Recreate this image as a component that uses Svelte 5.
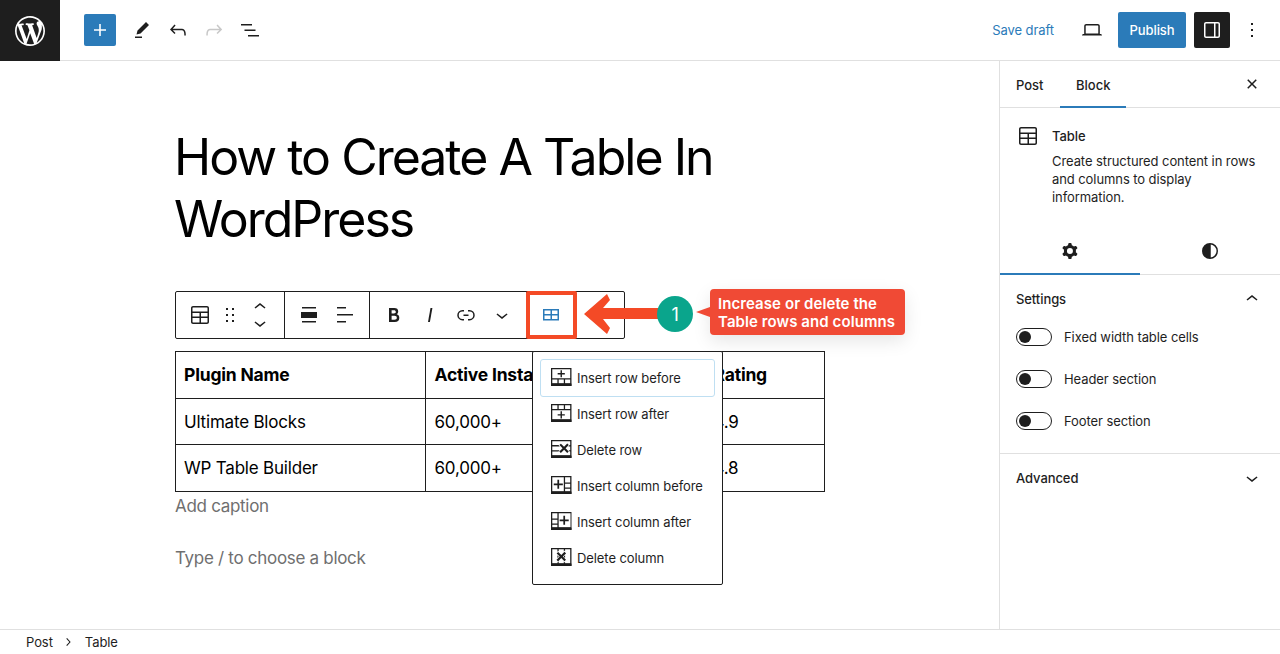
<script>
  const wp = "M20 10c0-5.51-4.49-10-10-10C4.48 0 0 4.49 0 10c0 5.52 4.48 10 10 10 5.51 0 10-4.48 10-10zM7.78 15.37L4.37 6.22c.55-.02 1.17-.08 1.17-.08.5-.06.44-1.13-.06-1.11 0 0-1.45.11-2.37.11-.18 0-.37 0-.58-.01C4.12 2.69 6.87 1.11 10 1.11c2.33 0 4.45.87 6.05 2.34-.68-.11-1.65.39-1.65 1.58 0 .74.45 1.36.9 2.1.35.61.55 1.36.55 2.46 0 1.49-1.4 5-1.4 5l-3.03-8.37c.54-.02.82-.17.82-.17.5-.05.44-1.25-.06-1.22 0 0-1.44.12-2.38.12-.87 0-2.33-.12-2.33-.12-.5-.03-.56 1.2-.06 1.22l.92.08 1.26 3.41zM17.41 10c.24-.64.74-1.87.43-4.25.7 1.29 1.05 2.71 1.05 4.25 0 3.29-1.73 6.24-4.4 7.78.97-2.59 1.94-5.2 2.92-7.78zM6.1 18.09C3.12 16.65 1.11 13.53 1.11 10c0-1.3.23-2.48.72-3.59C3.25 10.3 4.67 14.2 6.1 18.09zm4.03-6.63l2.58 6.98c-.86.29-1.76.45-2.71.45-.79 0-1.57-.11-2.29-.33.81-2.38 1.62-4.74 2.42-7.1z";
  const i = {
    plus: "M18 11.2h-5.2V6h-1.6v5.2H6v1.6h5.2V18h1.6v-5.2H18z",
    pencil: "m19 7-3-3-8.5 8.5-1 4 4-1L19 7Zm-7 11.5H5V20h7v-1.5Z",
    undo: "M18.3 11.7c-.6-.6-1.4-.9-2.3-.9H6.7l2.9-3.3-1.1-1-4.5 5L8.5 16l1-1-2.7-2.7H16c.5 0 .9.2 1.3.5 1 1 1 3.4 1 4.5v.3h1.5v-.2c0-1.5 0-4.3-1.5-5.7z",
    redo: "M15.6 6.5l-1.1 1 2.9 3.3H8c-.9 0-1.7.3-2.3.9-1.4 1.5-1.4 4.2-1.4 5.6v.2h1.5v-.3c0-1.1 0-3.5 1-4.5.3-.3.7-.5 1.3-.5h9.2L14.5 15l1.1 1.1 4.6-4.6-4.6-5z",
    list: "M3 6h11v1.5H3V6Zm3.5 5.5h11V13h-11v-1.5ZM21 17H10v1.5h11V17Z",
    laptop: "M20.5 16h-.7V8c0-1.1-.9-2-2-2H6.2c-1.1 0-2 .9-2 2v8h-.7c-.8 0-1.5.7-1.5 1.5h20c0-.8-.7-1.5-1.5-1.5zM5.7 8c0-.3.2-.5.5-.5h11.6c.3 0 .5.2.5.5v7.6H5.7V8z",
    sidebar: "M18 4H6c-1.1 0-2 .9-2 2v12c0 1.1.9 2 2 2h12c1.1 0 2-.9 2-2V6c0-1.1-.9-2-2-2zm-4 14.5H6c-.3 0-.5-.2-.5-.5V6c0-.3.2-.5.5-.5h8v13zm4.5-.5c0 .3-.2.5-.5.5h-2.5v-13H18c.3 0 .5.2.5.5v12z",
    more: "M13 19h-2v-2h2v2zm0-6h-2v-2h2v2zm0-6h-2V5h2v2z",
    close: "M12 13.06l3.712 3.713 1.061-1.06L13.061 12l3.712-3.712-1.06-1.06L12 10.938 8.288 7.227l-1.061 1.06L10.939 12l-3.712 3.712 1.06 1.061L12 13.061z",
    table: "M19 3H5c-1.1 0-2 .9-2 2v14c0 1.1.9 2 2 2h14c1.1 0 2-.9 2-2V5c0-1.1-.9-2-2-2zM5 4.5h14c.3 0 .5.2.5.5v3.5h-15V5c0-.3.2-.5.5-.5zm8 5.5h6.5v3.5H13V10zm-1.5 3.5h-7V10h7v3.5zm-7 5.5v-4h7v4.5H5c-.3 0-.5-.2-.5-.5zm14.5.5h-6V15h6.5v4c0 .3-.2.5-.5.5z",
    edit: "M4 6v11.5h16V6H4zm1.5 1.5h6V11h-6V7.5zm0 8.5v-3.5h6V16h-6zm13 0H13v-3.5h5.5V16zM13 11V7.5h5.5V11H13z",
    drag: "M8 7h2V5H8v2zm0 6h2v-2H8v2zm0 6h2v-2H8v2zm6-14v2h2V5h-2zm0 8h2v-2h-2v2zm0 6h2v-2h-2v2z",
    up: "M6.5 12.4L12 8l5.5 4.4-.9 1.2L12 10l-4.5 3.6-1-1.2z",
    down: "M17.5 11.6L12 16l-5.5-4.4.9-1.2L12 14l4.6-3.6 1 1.2z",
    bold: "M14.7 11.3c1-.6 1.5-1.6 1.5-3 0-2.3-1.3-3.4-4-3.4H7v14h5.8c1.4 0 2.5-.3 3.3-1 .8-.7 1.2-1.7 1.2-2.9.1-1.9-.8-3.1-2.6-3.7zm-5.1-4h2.3c.6 0 1.1.1 1.4.4.3.3.5.7.5 1.2s-.2 1-.5 1.2c-.3.3-.8.4-1.4.4H9.6V7.3zm4.6 9c-.4.3-1 .4-1.7.4H9.6v-3.9h2.9c.7 0 1.3.2 1.7.5.4.3.6.8.6 1.5s-.2 1.2-.6 1.5z",
    italic: "M12.5 5L10 19h1.9l2.5-14z",
    link: "M10 17.389H8.444A5.194 5.194 0 1 1 8.444 7H10v1.5H8.444a3.694 3.694 0 0 0 0 7.389H10v1.5ZM14 7h1.556a5.194 5.194 0 0 1 0 10.39H14v-1.5h1.556a3.694 3.694 0 0 0 0-7.39H14V7Zm-4.5 6h5v-1.5h-5V13Z",
    wide: "M5 5.5h14V4H5v1.5zM4 9v6h16V9H4zm1 10.5h14V18H5v1.5z",
    left: "M13 5.5H4V4h9v1.5Zm7 7H4V11h16v1.5Zm-7 7H4V18h9v1.5Z",
    cog: "M10.289 4.836A1 1 0 0 1 11.275 4h1.306a1 1 0 0 1 .987.836l.244 1.466c.787.26 1.503.679 2.108 1.218l1.393-.522a1 1 0 0 1 1.216.437l.653 1.13a1 1 0 0 1-.23 1.273l-1.148.944a6.025 6.025 0 0 1 0 2.435l1.149.946a1 1 0 0 1 .23 1.272l-.653 1.13a1 1 0 0 1-1.216.437l-1.394-.522c-.605.54-1.32.958-2.108 1.218l-.244 1.466a1 1 0 0 1-.987.836h-1.306a1 1 0 0 1-.986-.836l-.244-1.466a5.995 5.995 0 0 1-2.108-1.218l-1.394.522a1 1 0 0 1-1.217-.436l-.653-1.131a1 1 0 0 1 .23-1.272l1.149-.946a6.026 6.026 0 0 1 0-2.435l-1.148-.944a1 1 0 0 1-.23-1.272l.653-1.131a1 1 0 0 1 1.217-.437l1.393.522a5.994 5.994 0 0 1 2.108-1.218l.244-1.466ZM14.929 12a3 3 0 1 1-6 0 3 3 0 0 1 6 0Z",
    contrast: "M12 4a8 8 0 1 0 0 16 8 8 0 0 0 0-16Zm.75 1.54a6.5 6.5 0 0 1 0 12.92V5.54Z"
  };
  const menu = [
    ["Insert row before", "M6.656 6.464h2.88v2.88h1.408v-2.88h2.88V5.12h-2.88V2.24H9.536v2.88h-2.88zM0 17.92V0h20.48v17.92H0zm7.68-2.56h5.12v-3.84H7.68v3.84zm-6.4 0H6.4v-3.84H1.28v3.84zM19.2 1.28H1.28v9.024H19.2V1.28zm0 10.24h-5.12v3.84h5.12v-3.84z"],
    ["Insert row after", "M13.824 10.176h-2.88v-2.88H9.536v2.88h-2.88v1.344h2.88v2.88h1.408v-2.88h2.88zM0 17.92V0h20.48v17.92H0zM6.4 1.28H1.28v3.84H6.4V1.28zm6.4 0H7.68v3.84h5.12V1.28zm6.4 0h-5.12v3.84h5.12V1.28zm0 5.056H1.28v9.024H19.2V6.336z"],
    ["Delete row", "M17.728 11.456L14.592 8.32l3.2-3.2-1.536-1.536-3.2 3.2L9.92 3.648 8.384 5.12l3.2 3.2-3.264 3.264 1.536 1.536 3.264-3.264 3.136 3.136 1.472-1.536zM0 17.92V0h20.48v17.92H0zm19.2-6.4h-.448l-1.28-1.28H19.2V6.4h-1.792l1.28-1.28h.512V1.28H1.28v3.84h6.208l1.28 1.28H1.28v3.84h7.424l-1.28 1.28H1.28v3.84H19.2v-3.84z"],
    ["Insert column before", "M6.4 3.776v3.648H2.752v1.792H6.4v3.648h1.728V9.216h3.712V7.424H8.128V3.776zM0 17.92V0h20.48v17.92H0zM12.8 1.28H1.28v14.08H12.8V1.28zm6.4 11.52h-5.12v2.56h5.12V12.8zm0-5.12h-5.12v3.84h5.12V7.68zm0-6.4h-5.12v5.12h5.12V1.28z"],
    ["Insert column after", "M14.08 12.864V9.216h3.648V7.424H14.08V3.776h-1.728v3.648H8.64v1.792h3.712v3.648zM0 17.92V0h20.48v17.92H0zM6.4 1.28H1.28v5.12H6.4V1.28zm0 6.4H1.28v3.84H6.4V7.68zm0 5.12H1.28v2.56H6.4V12.8zm13.12-11.52H7.68v14.08h11.84V1.28z"],
    ["Delete column", "M6.4 9.98L7.68 8.7v-.256L6.4 7.164V9.98zm6.4-1.532l1.28-1.28V9.92L12.8 8.64v-.192zm7.68 9.472V0H0v17.92h20.48zm-1.28-2.56h-5.12v-1.024l-.256.256-1.024-1.024v1.792H7.68v-1.792l-1.024 1.024-.256-.256v1.024H1.28V1.28H6.4v2.368l.704-.704.576.576V1.216h5.12V3.52l.96-.96.32.32V1.216h5.12V15.36zm-5.76-2.112l-3.136-3.136-3.264 3.264-1.536-1.536 3.264-3.264L5.632 5.44l1.536-1.536 3.136 3.136 3.2-3.2 1.536 1.536-3.2 3.2 3.136 3.136-1.536 1.536z"]
  ];
  const rows = [["Ultimate Blocks", "60,000+", "4.9"], ["WP Table Builder", "60,000+", "4.8"]];
  const toggles = ["Fixed width table cells", "Header section", "Footer section"];
</script>

{#snippet icon(d, cls = "")}
  <svg class={"ic " + cls} viewBox="0 0 24 24" width="24" height="24" aria-hidden="true"><path {d} fill-rule="evenodd" /></svg>
{/snippet}

<div class="page">
  <header class="top">
    <div class="logo"><svg viewBox="0 0 20 20" width="30" height="30" aria-hidden="true"><path d={wp} fill="#fff" /></svg></div>
    <div class="tools">
      <span class="add">{@render icon(i.plus)}</span>
      <span class="tool">{@render icon(i.pencil)}</span>
      <span class="tool">{@render icon(i.undo)}</span>
      <span class="tool redo">{@render icon(i.redo)}</span>
      <span class="tool">{@render icon(i.list)}</span>
    </div>
    <div class="actions">
      <span class="save">Save draft</span>
      <span class="preview">{@render icon(i.laptop)}</span>
      <span class="publish">Publish</span>
      <span class="side-btn">{@render icon(i.sidebar)}</span>
      <span class="more">{@render icon(i.more)}</span>
    </div>
  </header>

  <div class="body">
    <main class="canvas">
      <div class="column">
        <h1>How to Create A Table In WordPress</h1>
        <div class="block">
          <div class="toolbar">
            <div class="group g1">
              <span class="tb">{@render icon(i.table)}</span>
              <span class="tb narrow">{@render icon(i.drag)}</span>
              <span class="mover">
                <span>{@render icon(i.up)}</span>
                <span>{@render icon(i.down)}</span>
              </span>
            </div>
            <div class="group">
              <span class="tb">{@render icon(i.wide)}</span>
              <span class="tb">{@render icon(i.left)}</span>
            </div>
            <div class="group">
              <span class="tb">{@render icon(i.bold)}</span>
              <span class="tb">{@render icon(i.italic)}</span>
              <span class="tb">{@render icon(i.link)}</span>
              <span class="tb">{@render icon(i.down)}</span>
            </div>
            <div class="group g4">
              <span class="tb blue">{@render icon(i.edit)}</span>
            </div>
          </div>

          <table>
            <colgroup><col class="c1" /><col class="c2" /><col /></colgroup>
            <tbody>
              <tr class="head"><th>Plugin Name</th><th>Active Installs</th><th>Rating</th></tr>
              {#each rows as r, n}
                <tr class:last={n === 1}>{#each r as c}<td>{c}</td>{/each}</tr>
              {/each}
            </tbody>
          </table>
          <div class="caption">Add caption</div>
          <div class="para">Type / to choose a block</div>

          <div class="pop">
            {#each menu as m, n}
              <div class="item" class:focus={n === 0}>
                <svg viewBox="-2 -2 24 24" width="24" height="24" aria-hidden="true">
                  <path d={m[1]} fill-rule="evenodd" />
                  <rect x="0" y="15.6" width="20.48" height="2.32" />
                </svg>
                <span>{m[0]}</span>
              </div>
            {/each}
          </div>

          <div class="callout">
            <div class="redbox"></div>
            <svg class="arrow" viewBox="0 0 90 48" width="90" height="48" aria-hidden="true">
              <polygon points="6,23 29,3 32,9 25,17 84,17 84,28 25,28 32,37 29,43" fill="#f44a26" />
            </svg>
            <div class="num">1</div>
            <div class="tip">Increase or delete the<br />Table rows and columns</div>
          </div>
        </div>
      </div>
    </main>

    <aside class="side">
      <div class="tabs">
        <span class="tab first">Post</span>
        <span class="tab on">Block</span>
        <span class="x">{@render icon(i.close)}</span>
      </div>
      <div class="card">
        {@render icon(i.table)}
        <div>
          <div class="card-title">Table</div>
          <p>Create structured content in rows and columns to display information.</p>
        </div>
      </div>
      <div class="subtabs">
        <span class="on">{@render icon(i.cog)}</span>
        <span>{@render icon(i.contrast)}</span>
      </div>
      <section class="panel">
        <div class="panel-h"><span>Settings</span>{@render icon(i.up)}</div>
        {#each toggles as t}
          <div class="row"><span class="switch"><span></span></span><span>{t}</span></div>
        {/each}
      </section>
      <div class="panel-h adv"><span>Advanced</span>{@render icon(i.down)}</div>
    </aside>
  </div>

  <footer class="crumbs">
    <span>Post</span>
    <svg viewBox="0 0 24 24" width="16" height="16" aria-hidden="true"><path d="M10.6 6 9.4 7l4.6 5-4.6 5 1.2 1 5.4-6z" /></svg>
    <span>Table</span>
  </footer>
</div>

<style>
  :global(body) { margin: 0; background: #fff; }
  .page {
    width: 1280px; height: 654px; overflow: hidden; display: flex; flex-direction: column;
    font-family: Inter, "Liberation Sans", sans-serif; color: #1e1e1e; font-size: 13px; letter-spacing: -.08px;
  }
  .ic { display: block; fill: currentColor; flex: none; }

  .top { height: 60px; flex: none; display: flex; align-items: center; border-bottom: 1px solid #e0e0e0; box-sizing: content-box; }
  .logo { width: 60px; height: 61px; margin-bottom: -1px; background: #1e1e1e; display: flex; align-items: center; justify-content: center; }
  .tools { display: flex; align-items: center; margin-left: 24px; }
  .add { width: 32px; height: 32px; background: #2b7bb9; color: #fff; border-radius: 2px; display: flex; align-items: center; justify-content: center; margin-right: 8px; }
  .tool { width: 36px; height: 36px; display: flex; align-items: center; justify-content: center; }
  .redo { color: #c8c8c8; }
  .actions { margin-left: auto; display: flex; align-items: center; }
  .save { color: #2b7bb9; margin-right: 20px; }
  .preview { width: 36px; height: 36px; display: flex; align-items: center; justify-content: center; margin-right: 8px; }
  .publish { width: 68px; height: 36px; background: #2b7bb9; color: #fff; border-radius: 2px; font-weight: 500; display: flex; align-items: center; justify-content: center; margin-right: 8px; }
  .side-btn { width: 36px; height: 36px; background: #1e1e1e; color: #fff; border-radius: 2px; display: flex; align-items: center; justify-content: center; margin-right: 4px; }
  .more { width: 36px; height: 36px; display: flex; align-items: center; justify-content: center; margin-right: 10px; }

  .body { flex: 1; display: flex; min-height: 0; }
  .canvas { flex: 1; min-width: 0; }
  .column { width: 650px; margin-left: 175px; padding-top: 65px; }
  h1 { margin: 0 0 41px -1px; font-size: 50px; line-height: 62px; font-weight: 400; color: #000; width: 600px; letter-spacing: -2px; }

  .block { position: relative; }
  .toolbar { display: flex; height: 48px; box-sizing: border-box; border: 1px solid #1e1e1e; border-radius: 2px; width: 450px; background: #fff; }
  .group { display: flex; align-items: center; padding: 0 6px; border-right: 1px solid #1e1e1e; }
  .g1 { padding-right: 12px; }
  .g4 { border-right: 0; flex: 1; padding: 0 0 0 6px; }
  .tb { width: 36px; height: 36px; display: flex; align-items: center; justify-content: center; }
  .narrow { width: 24px; }
  .mover { width: 24px; margin-left: 6px; display: flex; flex-direction: column; }
  .mover span { height: 16px; display: flex; align-items: center; }
  .blue { color: #2b7bb9; }

  table { margin-top: 12px; width: 650px; table-layout: fixed; border-collapse: collapse; font-size: 17px; line-height: 26px; color: #000; letter-spacing: -.2px; }
  .c1 { width: 250px; }
  .c2 { width: 279px; }
  th, td { border: 1px solid #1e1e1e; padding: 0 8.5px; height: 46px; text-align: left; box-sizing: border-box; }
  th:first-child, td:first-child { padding-left: 8px; }
  th { font-weight: 700; font-size: 17.5px; }
  .head th { height: 47px; }
  .last td { height: 47px; }
  .caption { font-size: 17px; line-height: 28px; color: #6f6f6f; letter-spacing: -.3px; }
  .para { margin-top: 24px; font-size: 17px; line-height: 28px; color: #6f6f6f; letter-spacing: -.3px; }

  .pop { position: absolute; left: 357px; top: 60px; width: 191px; box-sizing: border-box; padding: 8px 7px; background: #fff; border: 1px solid #1e1e1e; border-radius: 2px; }
  .item { height: 36px; box-sizing: border-box; border: 1px solid transparent; border-radius: 3px; display: flex; align-items: center; gap: 4px; padding-left: 8px; color: #1e1e1e; white-space: nowrap; }
  .item svg { display: block; flex: none; fill: #1e1e1e; }
  .focus { border-color: #bfdff2; height: 38px; margin: -1px 0; }

  .callout { position: absolute; left: 0; top: 0; width: 0; height: 0; }
  .redbox { position: absolute; left: 351px; top: 0; width: 51px; height: 48px; box-sizing: border-box; border: 4px solid #f44a26; border-radius: 2px; }
  .arrow { position: absolute; left: 403px; top: 0; }
  .num { position: absolute; left: 482px; top: 5px; width: 36px; height: 36px; border-radius: 50%; background: #0aa58c; color: #fff; font-size: 18px; font-weight: 400; display: flex; align-items: center; justify-content: center; }
  .tip { position: absolute; left: 535px; top: -2px; width: 195px; height: 46px; box-sizing: border-box; padding: 6px 8px; background: #f04a35; color: #fff; border-radius: 4px; font-size: 15px; line-height: 18px; font-weight: 600; letter-spacing: .08px; white-space: nowrap; box-shadow: 0 6px 18px rgba(0,0,0,.1); }
  .tip::before { content: ""; position: absolute; left: -14px; top: 18px; border: 5px solid transparent; border-right: 14px solid #f04a35; border-left: 0; }

  .side { width: 281px; flex: none; box-sizing: border-box; border-left: 1px solid #e0e0e0; }
  .tabs { height: 47px; box-sizing: border-box; border-bottom: 1px solid #e0e0e0; display: flex; }
  .tab { padding: 0 16px; display: flex; align-items: center; height: 47px; font-weight: 500; letter-spacing: 0; box-sizing: border-box; }
  .tab.first { width: 60px; }
  .tab.on { box-shadow: inset 0 -2px 0 #2b7bb9; width: 66px; }
  .x { margin-left: auto; margin-right: 16px; display: flex; align-items: center; }
  .card { display: flex; gap: 12px; padding: 16px 16px 0; height: 95px; }
  .card-title { font-weight: 500; line-height: 24px; }
  .card p { margin: 4px 0 0; line-height: 18px; }
  .subtabs { display: flex; height: 48px; box-sizing: border-box; margin-top: 8px; border-bottom: 1px solid #e0e0e0; }
  .subtabs span { flex: 1; display: flex; align-items: center; justify-content: center; height: 48px; box-sizing: border-box; }
  .subtabs .on { box-shadow: inset 0 -2px 0 #2b7bb9; }
  .panel { border-bottom: 1px solid #e0e0e0; height: 178px; }
  .panel-h { display: flex; align-items: center; justify-content: space-between; padding: 7px 16px 0; height: 34px; font-weight: 500; }
  .row { display: flex; align-items: center; gap: 12px; height: 42px; padding-left: 16px; }
  .switch { width: 36px; height: 18px; box-sizing: border-box; border: 1px solid #1e1e1e; border-radius: 9px; display: flex; align-items: center; padding-left: 2px; }
  .switch span { width: 12px; height: 12px; border-radius: 50%; background: #1e1e1e; }
  .adv { height: 48px; padding: 0 16px; }

  .crumbs { height: 25px; flex: none; box-sizing: border-box; border-top: 1px solid #e0e0e0; display: flex; align-items: center; padding-left: 26px; }
  .crumbs svg { margin: 0 9px 0 7px; fill: #1e1e1e; }
</style>
